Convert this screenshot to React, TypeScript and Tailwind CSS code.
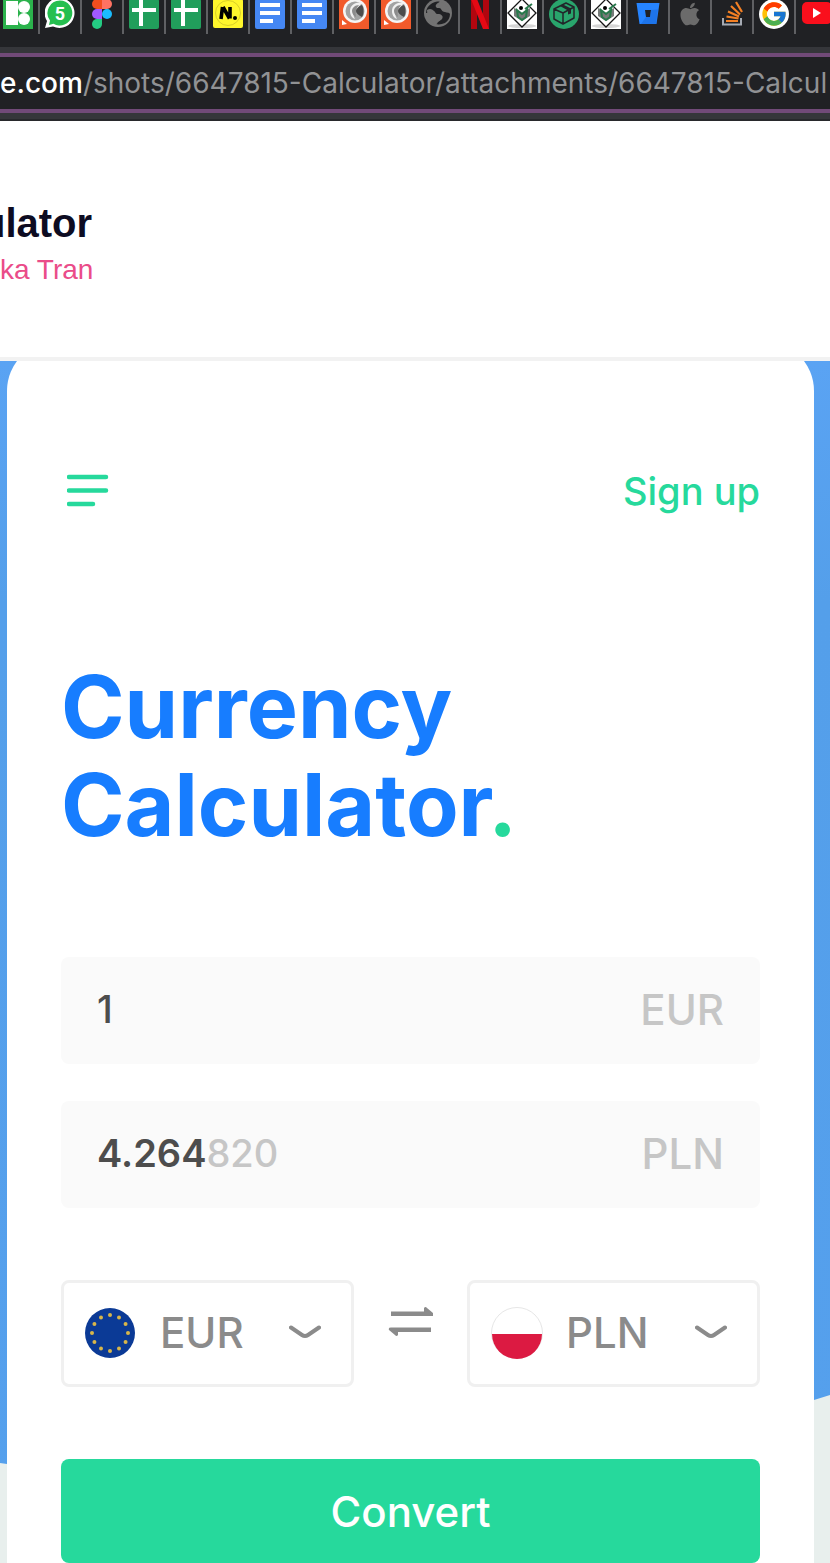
import type { ReactNode } from "react";
import { FaApple } from "react-icons/fa";
import { FcGoogle } from "react-icons/fc";

function Icon({ children }: { children: ReactNode }) {
  return (
    <svg viewBox="0 0 30 30" className="block size-[30px]" aria-hidden="true">
      {children}
    </svg>
  );
}

const Icons8 = () => (
  <Icon>
    <path fill="#2bb24c" d="M0 0h30v30H0z" />
    <path fill="#fff" d="M3 2h12v24H3z" />
    <circle cx="21" cy="8" r="6" fill="#fff" />
    <circle cx="21" cy="20" r="6" fill="#fff" />
  </Icon>
);

const WhatsApp = () => (
  <Icon>
    <path fill="#fff" d="M15-1a15 15 0 1 1-7 28.500L0 29l2-7A15 15 0 0 1 15-1z" />
    <path fill="#25bf4f" d="M15 1.500a12.500 12.500 0 1 1-6.500 23.300L4 26l1-4.500A12.500 12.500 0 0 1 15 1.500z" />
    <text x="15" y="20.500" textAnchor="middle" fill="#fff" fontSize="18" fontWeight="700" fontFamily="Roboto, sans-serif">5</text>
  </Icon>
);

const Figma = () => (
  <Icon>
    <path fill="#f24e1e" d="M10 0h5v10h-5a5 5 0 0 1 0-10z" />
    <path fill="#ff7262" d="M15 0h5a5 5 0 0 1 0 10h-5z" />
    <path fill="#a259ff" d="M10 10h5v10h-5a5 5 0 0 1 0-10z" />
    <circle cx="20" cy="15" r="5" fill="#1abcfe" />
    <path fill="#24cb83" d="M10 20h5v5a5 5 0 1 1-5-5z" />
  </Icon>
);

const Sheets = () => (
  <Icon>
    <rect width="30" height="30" rx="2" fill="#219e5b" />
    <path fill="#fff" d="M10 0h4v9h13v4H14v14h-4V13H3V9h7z" />
  </Icon>
);

const Noted = () => (
  <Icon>
    <rect width="30" height="29" rx="2" fill="#fff62c" />
    <circle cx="15" cy="14" r="12.500" fill="none" stroke="#d9cf27" strokeWidth="1" />
    <path d="M8 20 9.500 8M10 8l6.500 11.500M17 19.500V8" fill="none" stroke="#000" strokeWidth="3.600" strokeLinejoin="round" />
    <circle cx="22" cy="19" r="2" />
  </Icon>
);

const Docs = () => (
  <Icon>
    <rect width="30" height="30" rx="2" fill="#4587f3" />
    <path fill="#fff" d="M5 4h20v4H5zM5 12h20v4H5zM5 20h13v4H5z" />
  </Icon>
);

const Rocket = () => (
  <Icon>
    <path fill="#f15a2b" d="M0 0h30v30H0z" />
    <circle cx="16" cy="12" r="12" fill="#f5f5f5" />
    <circle cx="16" cy="12" r="9.500" fill="#a2a3a3" />
    <path fill="#f0f0f0" d="M23 4c-6-2-12 2-12 8 0 4 2 7 5 8-2-3-2-6 0-8z" />
    <path fill="#8b8b8b" d="M20 6c-4 0-7 3-7 6s2 5 4 6c-1-5 0-8 3-12z" />
    <path fill="#4c4c4c" d="M23 6c-3 1-6 4-6 6s2 4 6 6c2-3 2-9 0-12z" />
    <path fill="#fff" d="m3 21 5 4-5 1z" />
  </Icon>
);

const Globe = () => (
  <Icon>
    <circle cx="15" cy="14" r="14" fill="#737373" />
    <path
      fill="#202124"
      d="M17 3c-3 1-5 3-4 5 1 2 4 0 5 2s2 3 4 3c2 1 4 0 5 2 0 4-2 7-5 9-3 1-6 2-9 1 0-2 1-3 3-3 2-1 3-3 1-4-2-2-4-1-6-2-3-2-6-2-8-2 0-4 2-7 5-9 3-2 6-3 9-2z"
    />
    <path fill="#737373" d="M4 11c3-2 5-1 7 1 2 1 1 3 4 3s6 2 4 5c-2 2-4 2-5 5-6-1-10-6-10-14zM17 3c5 1 9 5 9 10-3-1-5 0-7-2-1-2-1-3-3-3-3-1-1-4 1-5z" />
  </Icon>
);

const Netflix = () => (
  <Icon>
    <path fill="#b1060f" d="M6 0h6v30H6zM18 0h6v30h-6z" />
    <path fill="#e50914" d="M6 0h6l12 30h-6z" />
  </Icon>
);

const Diamond = () => (
  <Icon>
    <path fill="#fff" d="M0 0h30v30H0z" />
    <ellipse cx="15" cy="27" rx="14" ry="2" fill="#d5d5d5" />
    <path fill="#fff" stroke="#151515" strokeWidth="1.300" d="M15 0 29 14 15 28 1 14z" />
    <path fill="#767b79" d="m7 9 8 5 8-5v8l-8 5-8-5z" />
    <path fill="none" stroke="#287a4c" strokeWidth="2" d="m10 11 1 7 4 3 4-3 1-7-5 4zM18 10l7-5" />
    <circle cx="14" cy="9" r="2" />
  </Icon>
);

const Box = () => (
  <Icon>
    <circle cx="15" cy="15" r="15" fill="#29a56c" />
    <path fill="none" stroke="#22262a" strokeWidth="1.500" strokeLinejoin="round" d="m5 10 12-6 8 4v11l-11 6-9-5zM5 10l9 4 11-6M14 14v11" />
    <path fill="#22262a" d="m11 7 3-1.500 8 4v5l-3 1v-4z" />
  </Icon>
);

const Bucket = () => (
  <Icon>
    <path fill="#2684ff" d="M3.500 4h23l-3 21h-17zM12 11l1 7h4l1-7z" fillRule="evenodd" />
    <path fill="#1567d8" d="m18 11 7-.5-2 14.500H8l5-7h4z" opacity=".55" />
  </Icon>
);

const Apple = () => (
  <span className="flex size-[30px] items-center justify-center text-[#6b6b6b]">
    <FaApple size={26} />
  </span>
);

const StackOverflow = () => (
  <Icon>
    <path fill="none" stroke="#a6abb3" strokeWidth="2" d="M6 19v6.500h18V19" />
    <path fill="none" stroke="#f48024" strokeWidth="2.200" d="M9 22h12M9.500 17.500l12 2M11 12.500l11 5M14 7l9 8.500M19 3l6 10" />
  </Icon>
);

const Google = () => (
  <span className="flex size-[30px] items-center justify-center rounded-full bg-white">
    <FcGoogle size={28} />
  </span>
);

const YouTube = () => (
  <Icon>
    <rect x="1" y="3" width="30" height="22" rx="5" fill="#fa0f1c" />
    <path fill="#fff" d="m12 9 8 5-8 5z" />
  </Icon>
);

const tabs = [
  Icons8, WhatsApp, Figma, Sheets, Sheets, Noted, Docs, Docs, Rocket, Rocket,
  Globe, Netflix, Diamond, Box, Diamond, Bucket, Apple, StackOverflow, Google, YouTube,
];

function Browser() {
  return (
    <div className="overflow-hidden border-b-2 border-[#28292c] bg-[#35363a]">
      <div className="-ml-0.5 flex h-[47px] bg-[#202124]">
        {tabs.map((Tab, i) => (
          <div key={i} className="flex h-[34px] w-[42px] shrink-0 border-r-2 border-[#5f6063] pl-[5px]">
            <div className="-mt-px">
              <Tab />
            </div>
          </div>
        ))}
      </div>
      <div className="mt-1.5 mb-1.5 flex h-[60px] items-center overflow-hidden border-y-4 border-[#714a78] bg-[#202124] font-['Inter',sans-serif] text-[28px] whitespace-nowrap text-[#919294]">
        <span className="font-medium text-white">e.com</span>
        <span>/shots/6647815-Calculator/attachments/6647815-Calcul</span>
      </div>
    </div>
  );
}

function Chevron() {
  return (
    <svg viewBox="0 0 32 14" className="pointer-events-none absolute top-[45px] right-[33px] h-3.5 w-8" aria-hidden="true">
      <path d="M2 2.500 13 10q3 2 6 0L30 2.500" fill="none" stroke="#8b8b8b" strokeWidth="4" strokeLinecap="round" />
    </svg>
  );
}

function EuFlag() {
  return (
    <svg viewBox="0 0 50 50" className="size-[50px]" aria-hidden="true">
      <circle cx="25" cy="25" r="25" fill="#0b3a96" />
      {Array.from({ length: 12 }, (_, i) => (
        <circle
          key={i}
          cx={25 + 18 * Math.sin((i * Math.PI) / 6)}
          cy={25 - 18 * Math.cos((i * Math.PI) / 6)}
          r="2"
          fill="#d8b64a"
        />
      ))}
    </svg>
  );
}

function PlFlag() {
  return (
    <svg viewBox="0 0 52 52" className="size-[52px]" aria-hidden="true">
      <circle cx="26" cy="26" r="25.500" fill="#fff" stroke="#e6e6e6" />
      <path d="M1 27h50a25 25 0 0 1-50 0z" fill="#dc1a42" />
    </svg>
  );
}

function CurrencySelect({ label, value, flag }: { label: string; value: string; flag: ReactNode }) {
  return (
    <div className="relative h-[107px] min-w-0 flex-1">
      <select
        aria-label={label}
        defaultValue={value}
        className="h-full w-full appearance-none rounded-lg border-[3px] border-[#f0f0f0] bg-white pb-0.5 pl-24 text-[42px] font-medium text-[#8b8b8b]"
      >
        <option>EUR</option>
        <option>PLN</option>
      </select>
      <span className="pointer-events-none absolute top-0 bottom-0.5 left-6 flex items-center">{flag}</span>
      <Chevron />
    </div>
  );
}

const fieldRow = "flex h-[107px] items-center justify-between rounded-lg bg-[#fafafa] pr-9 pb-0.5 pl-9";

export default function App() {
  return (
    <div className="min-h-screen overflow-hidden bg-white">
      <Browser />
      <header className="overflow-hidden border-b-4 border-[#f2f2f2] pt-[77px] pb-[65px] font-['Liberation_Sans',sans-serif]">
        <h1 className="-ml-[19px] text-[40px] leading-[50px] font-bold text-[#0d0c22]">ulator</h1>
        <a href="#author" className="block text-[28px] leading-[44px] text-[#ea4c89]">ka Tran</a>
      </header>

      <main className="relative isolate overflow-hidden bg-linear-to-b from-[#5aa3f3] via-[#549fea] via-20% to-[#55a0ed] pr-4 pl-[7px] font-['Inter',sans-serif]">
        <svg viewBox="0 0 830 168" preserveAspectRatio="none" className="absolute bottom-0 left-0 -z-10 h-[168px] w-full" aria-hidden="true">
          <path d="M0 68 7 69Q450 150 814 5L830 0V168H0z" fill="#e8efed" />
        </svg>
        <div className="-mt-5 rounded-t-[50px] bg-white pt-[120px] pr-[54px] pl-[54px]">
          <div className="flex h-[60px] items-center justify-between">
            <button type="button" aria-label="Menu" className="pl-1.5">
              <svg viewBox="0 0 42 34" className="h-[34px] w-[42px]" aria-hidden="true">
                <path d="M2 3h37M2 16.500h37M2 30h24" stroke="#26d99c" strokeWidth="4.500" strokeLinecap="round" />
              </svg>
            </button>
            <a href="#sign-up" className="text-[38px] font-medium text-[#26d99c]">Sign up</a>
          </div>
          <h2 className="mt-[137px] text-[86px] leading-[98px] font-bold text-[#177dff]">
            Currency
            <br />
            Calculator<span className="text-[#26d99c]">.</span>
          </h2>
          <form onSubmit={(e) => e.preventDefault()} className="mt-[103px]">
            <div className={fieldRow}>
              <input id="amount" defaultValue="1" className="w-0 min-w-0 flex-1 bg-transparent text-[38px] font-medium text-[#4d4d4d] outline-none" />
              <label htmlFor="amount" className="text-[42px] font-medium text-[#c6c6c6]">EUR</label>
            </div>
            <div className={`${fieldRow} mt-[37px]`}>
              <output id="result" className="text-[38px] font-medium text-[#c6c6c6]">
                <span className="font-semibold text-[#4d4d4d]">4.264</span>820
              </output>
              <label htmlFor="result" className="text-[42px] font-medium text-[#c6c6c6]">PLN</label>
            </div>
            <div className="mt-[72px] flex">
              <CurrencySelect label="From currency" value="EUR" flag={<EuFlag />} />
              <button type="button" aria-label="Swap currencies" className="flex w-[113px] justify-center pt-[27px]">
                <svg viewBox="0 0 46 30" className="h-[30px] w-[46px]" aria-hidden="true">
                  <path d="M3 4.500h33V1q1.500-2 3 0l6 5v3H3zM43 20.500V25H10v3q-1.500 2-3 0l-6-5q-1-2.500 2-2.500z" fill="#8b8b8b" />
                </svg>
              </button>
              <CurrencySelect label="To currency" value="PLN" flag={<PlFlag />} />
            </div>
            <button type="submit" className="mt-[72px] block h-[104px] w-full rounded-lg bg-[#26d99c] text-[42px] font-medium text-white">
              Convert
            </button>
          </form>
        </div>
      </main>
    </div>
  );
}
